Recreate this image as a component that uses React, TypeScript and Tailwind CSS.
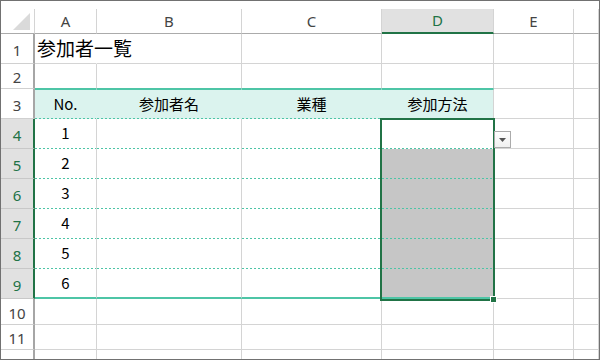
import React from "react";

// Excel-like sheet: 参加者一覧 with a selected drop-down column
const columns = ["A", "B", "C", "D", "E", ""];

const rows = [
  { n: 1, h: "h-[30px]" },
  { n: 2, h: "h-[25px]" },
  { n: 3, h: "h-[30px]" },
  { n: 4, h: "h-[30px]" },
  { n: 5, h: "h-[30px]" },
  { n: 6, h: "h-[30px]" },
  { n: 7, h: "h-[30px]" },
  { n: 8, h: "h-[30px]" },
  { n: 9, h: "h-[30px]" },
  { n: 10, h: "h-[26px]" },
  { n: 11, h: "h-[25px]" },
  { n: 12, h: "h-[25px]" },
];

const headers = ["No.", "参加者名", "業種", "参加方法"];

const jp = "font-['Noto_Sans_CJK_JP',sans-serif]";
const latin = "font-['Noto_Sans','Noto_Sans_CJK_JP',sans-serif]";

function cellText(r: number, c: number) {
  if (r === 3 && c < 4) return headers[c];
  if (r >= 4 && r <= 9 && c === 0) return String(r - 3);
  return "";
}

function DataCell({ r, c, h }: { r: number; c: number; h: string }) {
  const inTable = r >= 3 && r <= 9 && c < 4;
  const dashed = inTable && r <= 8;

  let cls = `flex flex-col border-r border-b border-[#d4d4d4] ${h}`;
  if (r === 1 && c === 0) cls += " border-r-white";
  if (r === 2 && c < 4) cls += " border-b-[#4ec5a6]";
  if (inTable && r === 3) {
    cls += " bg-[#dbf3ee] border-t border-t-[#4ec5a6]";
    if (c < 3) cls += " border-r-[#dbf3ee]";
  }
  if (dashed) cls += " border-b-0";
  if (inTable && r === 9) cls += " border-b-2 border-b-[#4ec5a6]";
  if (r >= 5 && r <= 9 && c === 3) cls += " bg-[#c6c6c6]";

  if (r === 1 && c === 0) {
    return (
      <div className={cls}>
        <div className={`flex-1 flex items-center pl-[2px] pb-[3px] whitespace-nowrap text-[19px] text-black ${jp}`}>
          参加者一覧
        </div>
      </div>
    );
  }

  return (
    <div className={cls}>
      <div className={`flex-1 flex items-center justify-center text-[15px] text-black ${jp}`}>
        {cellText(r, c)}
      </div>
      {dashed && (
        <div className="h-px bg-[repeating-linear-gradient(90deg,#4ec5a6_0_2px,transparent_2px_4px)]" />
      )}
    </div>
  );
}

export default function App() {
  return (
    <div className="relative w-[600px] h-[360px] overflow-hidden bg-white border border-[#717171] pt-[8px]">
      <div className="grid grid-cols-[34px_62px_145px_140px_112px_80px_1fr]">
        {/* column headers */}
        <div className="h-[25px] border-r border-b border-r-[#d4d4d4] border-b-[#ababab] relative">
          <svg className="absolute left-0 top-0" width="33" height="24" viewBox="0 0 33 24">
            <polygon points="29,4 29,21 12,21" fill="#dadada" />
          </svg>
        </div>
        {columns.map((col) => (
          <div
            key={col || "f"}
            className={
              col === "D"
                ? `h-[25px] flex items-center justify-center border-r border-r-[#d4d4d4] border-b-2 border-b-[#217346] bg-[#e1e1e1] text-[15px] text-[#217346] ${latin}`
                : `h-[25px] flex items-center justify-center border-r border-r-[#d4d4d4] border-b border-b-[#ababab] text-[15px] text-[#444] ${latin}`
            }
          >
            {col}
          </div>
        ))}

        {rows.map((row) => {
          const sel = row.n >= 4 && row.n <= 9;
          return (
            <React.Fragment key={row.n}>
              <div
                className={
                  sel
                    ? `${row.h} flex items-center justify-center pt-[3px] border-r-2 border-r-[#217346] border-b border-b-[#c8c8c8] bg-[#e1e1e1] text-[15px] text-[#217346] ${latin}`
                    : `${row.h} flex items-center justify-center pt-[3px] border-r-2 border-r-[#a6a6a6] border-b border-b-[#d0d0d0] text-[15px] text-[#444] ${latin}`
                }
              >
                {row.n}
              </div>
              {columns.map((_, c) => (
                <DataCell key={c} r={row.n} c={c} h={row.h} />
              ))}
            </React.Fragment>
          );
        })}
      </div>

      {/* selection D4:D9 */}
      <div className="absolute left-[379px] top-[117px] w-[115px] h-[183px] border-2 border-[#217346] pointer-events-none" />
      {/* fill handle */}
      <div className="absolute left-[489px] top-[295px] w-[7px] h-[7px] bg-[#217346] border border-white" />
      {/* drop-down button */}
      <div className="absolute left-[493px] top-[130px] w-[17px] h-[17px] flex items-center justify-center border border-[#ababab] bg-[linear-gradient(#ffffff,#f0f0f0)]">
        <svg width="7" height="4" viewBox="0 0 7 4">
          <polygon points="0,0 7,0 3.5,4" fill="#555" />
        </svg>
      </div>
    </div>
  );
}
